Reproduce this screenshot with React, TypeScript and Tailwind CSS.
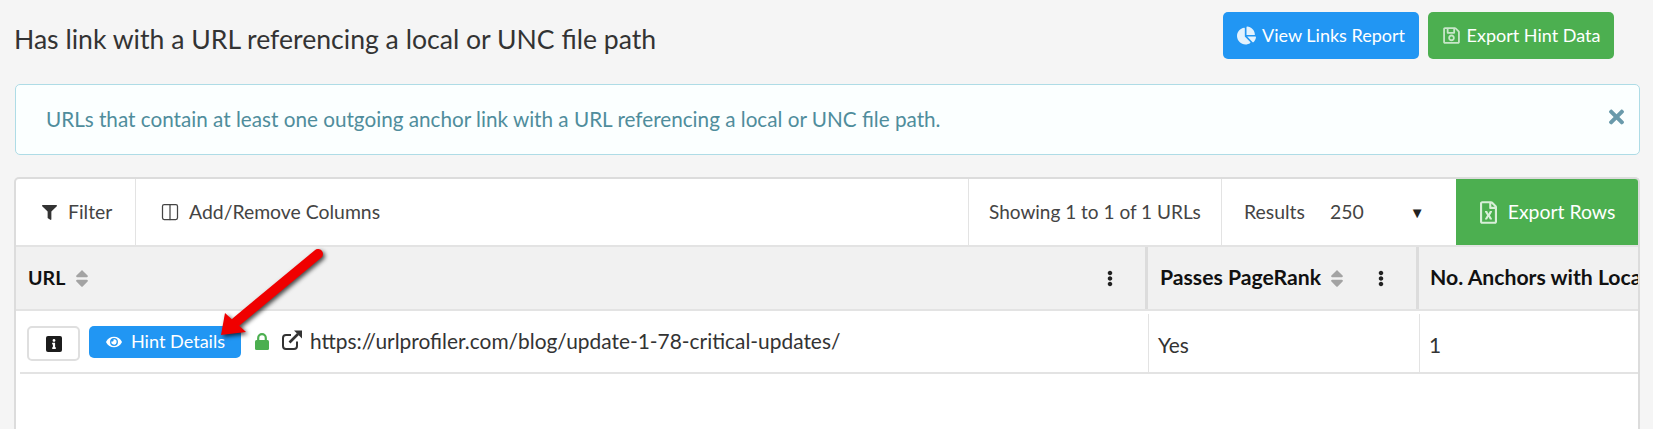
import { Columns2 } from "lucide-react";
import {
  FaChartPie,
  FaEllipsisV,
  FaEye,
  FaFilter,
  FaInfo,
  FaRegFileExcel,
  FaRegSave,
  FaSort,
  FaTimes,
} from "react-icons/fa";

function SortIcon() {
  return <FaSort className="w-[16px] h-[21px] text-[#a3a3a3]" />;
}

function Kebab() {
  return <FaEllipsisV className="w-[6px] h-[17px] text-[#222]" />;
}

function OpenLink() {
  return (
    <svg viewBox="0 0 22 22" className="w-[22px] h-[22px] ml-[12px] mt-[1px] text-[#333]" fill="none">
      <path d="M16 12.5V17a3 3 0 0 1-3 3H5a3 3 0 0 1-3-3V9a3 3 0 0 1 3-3h5" stroke="currentColor" strokeWidth="2" />
      <path d="M8.5 13.5 17 5" stroke="currentColor" strokeWidth="2.6" />
      <polygon points="13,1.5 21,1.5 21,9.5" fill="currentColor" />
    </svg>
  );
}

function Lock() {
  return (
    <svg viewBox="0 0 14 17" className="w-[14px] h-[17px] ml-[14px] mt-[5px] text-[#4caf50]" fill="none">
      <path d="M3.2 8V5a3.8 3.8 0 0 1 7.6 0v3" stroke="currentColor" strokeWidth="2.2" />
      <rect x="0" y="7" width="14" height="10" rx="1.5" fill="currentColor" />
    </svg>
  );
}

export default function App() {
  return (
    <div className="relative w-[1653px] h-[429px] overflow-hidden bg-[#f5f5f5] font-['Lato',sans-serif] text-[#333]">
      <div className="flex items-start h-[84px] pl-[14px] pr-[39px] pt-[12px]">
        <h1 className="flex-1 pt-[11px] text-[26.6px] leading-[32px] text-[#333]">
          Has link with a URL referencing a local or UNC file path
        </h1>
        <button className="flex items-center justify-center gap-[6px] w-[196px] h-[47px] mr-[9px] rounded-[5px] bg-[#2196f3] text-white text-[18px]">
          <FaChartPie className="w-[19px] h-[19px] text-[#e3f2fd]" />
          View Links Report
        </button>
        <button className="flex items-center justify-center gap-[6px] w-[186px] h-[47px] rounded-[5px] bg-[#4caf50] text-white text-[18px]">
          <FaRegSave className="w-[19px] h-[19px] text-[#c8e6c9]" />
          Export Hint Data
        </button>
      </div>

      <div className="flex items-center justify-between h-[71px] ml-[15px] mr-[13px] pl-[30px] pr-[15px] rounded-[5px] border border-[#aedce6] bg-[#fbffff] text-[20.7px] text-[#4f8d9c]">
        <span>URLs that contain at least one outgoing anchor link with a URL referencing a local or UNC file path.</span>
        <FaTimes className="w-[15px] h-[22px] -mt-[6px] text-[#6a9aab]" />
      </div>

      <div className="h-[260px] mt-[22px] ml-[14px] mr-[13px] rounded-t-[5px] border-2 border-b-0 border-[#dcdcdc] bg-white overflow-hidden">
        {/* toolbar */}
        <div className="flex h-[68px] border-b-2 border-[#e3e3e3] text-[19.4px] text-[#444]">
          <div className="flex items-center w-[120px] pl-[26px] gap-[11px] border-r border-[#e3e3e3]">
            <FaFilter className="w-[15px] h-[15px] text-[#333]" />
            Filter
          </div>
          <div className="flex items-center flex-1 pl-[24px] gap-[9px]">
            <Columns2 className="w-[20px] h-[20px] text-[#444]" strokeWidth={1.5} />
            Add/Remove Columns
          </div>
          <div className="flex items-center w-[254px] pl-[20px] border-x border-[#e3e3e3] text-[19px]">
            Showing 1 to 1 of 1 URLs
          </div>
          <div className="flex items-center w-[234px] pl-[22px]">
            <span>Results</span>
            <span className="ml-[25px]">250</span>
            <span className="ml-[46px] text-[15px] text-[#222]">▼</span>
          </div>
          <div className="flex items-center justify-center gap-[11px] w-[182px] pl-[1px] bg-[#4caf50] text-white">
            <FaRegFileExcel className="w-[17px] h-[23px] text-[#d7efd8]" />
            Export Rows
          </div>
        </div>

        {/* table header */}
        <div className="flex h-[64px] border-b-2 border-[#e3e3e3] bg-[#f1f1f1] text-[19.6px] font-bold text-[#111]">
          <div className="flex items-center w-[1132px] pl-[12px] pr-[32px] border-r-[3px] border-[#dcdcdc]">
            <span>URL</span>
            <span className="ml-[9px]"><SortIcon /></span>
            <span className="ml-auto"><Kebab /></span>
          </div>
          <div className="flex items-center w-[271px] pl-[12px] pr-[32px] border-r-[3px] border-[#dcdcdc]">
            <span className="text-[21.2px]">Passes PageRank</span>
            <span className="ml-[8px]"><SortIcon /></span>
            <span className="ml-auto"><Kebab /></span>
          </div>
          <div className="flex items-center flex-1 pl-[11px] whitespace-nowrap overflow-hidden text-[21.2px]">
            No. Anchors with Local or UNC
          </div>
        </div>

        {/* row */}
        <div className="flex h-[63px] ml-[4px] border-b-2 border-[#e3e3e3] text-[20.9px] text-[#333]">
          <div className="flex items-start w-[1129px] pt-[14px] pl-[7px] border-r border-[#e3e3e3] mt-[3px]">
            <button className="flex items-center justify-center w-[53px] h-[35px] -mt-[2px] rounded-[5px] border-2 border-[#dfdfdf] bg-white">
              <span className="flex items-center justify-center w-[16px] h-[16px] rounded-[2px] bg-[#1c1c1c]">
                <FaInfo className="w-[8px] h-[10px] text-white" />
              </span>
            </button>
            <button className="flex items-center justify-center gap-[8px] w-[152px] h-[32px] ml-[9px] -mt-[2px] rounded-[5px] bg-[#2196f3] text-white text-[18.1px]">
              <FaEye className="w-[18px] h-[14px]" />
              Hint Details
            </button>
            <Lock />
            <OpenLink />
            <span className="ml-[7px] -mt-[1px] leading-[28px]">
              https://urlprofiler.com/blog/update-1-78-critical-updates/
            </span>
          </div>
          <div className="flex items-center w-[271px] pl-[9px] pt-[4px] border-r border-[#e3e3e3] mt-[3px]">Yes</div>
          <div className="flex items-center flex-1 pl-[9px] pt-[4px] mt-[3px]">1</div>
        </div>
      </div>

      {/* red annotation arrow */}
      <svg
        className="absolute left-[205px] top-[240px] w-[130px] h-[105px] drop-shadow-[2px_2px_2px_rgba(0,0,0,0.7)]"
        viewBox="205 240 130 105"
      >
        <line x1="318" y1="254" x2="236" y2="322" stroke="#f00000" strokeWidth="10" strokeLinecap="round" />
        <polygon points="225,313 221,335 246,332" fill="#f00000" />
      </svg>
    </div>
  );
}
